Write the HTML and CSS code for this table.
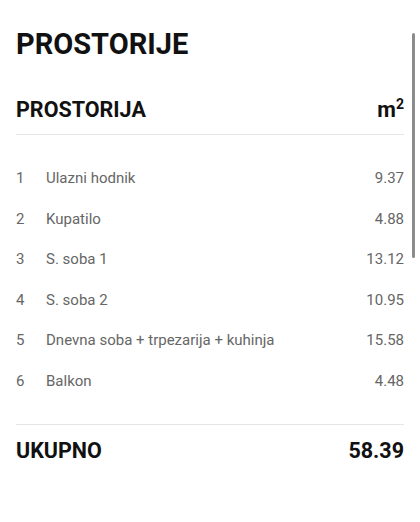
FILE: index.html
```html
<!DOCTYPE html>
<html lang="sr">
<head>
    <meta charset="UTF-8">
    <meta name="viewport" content="width=device-width, initial-scale=1.0">
    <title>Prostorije</title>
    <link rel="stylesheet" href="styles.css">
</head>
<body>
    <div class="page">
        <h1>PROSTORIJE</h1>

        <div class="table-head">
            <span>PROSTORIJA</span>
            <span>m<sup>2</sup></span>
        </div>

        <ul class="rooms">
            <li><span class="num">1</span><span class="name">Ulazni hodnik</span><span class="area">9.37</span></li>
            <li><span class="num">2</span><span class="name">Kupatilo</span><span class="area">4.88</span></li>
            <li><span class="num">3</span><span class="name">S. soba 1</span><span class="area">13.12</span></li>
            <li><span class="num">4</span><span class="name">S. soba 2</span><span class="area">10.95</span></li>
            <li><span class="num">5</span><span class="name">Dnevna soba + trpezarija + kuhinja</span><span class="area">15.58</span></li>
            <li><span class="num">6</span><span class="name">Balkon</span><span class="area">4.48</span></li>
        </ul>

        <div class="total">
            <span>UKUPNO</span>
            <span>58.39</span>
        </div>
    </div>
    <div class="scroll-thumb"></div>
</body>
</html>
```

FILE: styles.css
```css
body {
    margin: 0;
    font-family: Roboto, "Noto Sans", sans-serif;
    background: #fff;
    color: #111;
}

.page {
    padding: 0 16px;
}

h1 {
    margin: 28px 0 0;
    font-size: 29px;
    line-height: 32px;
    font-weight: 700;
}

.table-head {
    display: flex;
    justify-content: space-between;
    margin-top: 38px;
    padding-bottom: 12px;
    border-bottom: 1px solid #e6e6e6;
    font-size: 21.5px;
    line-height: 24px;
    font-weight: 700;
}

.table-head sup {
    font-size: 14px;
    line-height: 0;
}

.rooms {
    list-style: none;
    margin: 0;
    padding: 23px 0;
}

.rooms li {
    display: flex;
    font-size: 15px;
    line-height: 40.5px;
    color: #666;
}

.num {
    width: 30px;
}

.name {
    flex: 1;
}

.total {
    display: flex;
    justify-content: space-between;
    padding-top: 12px;
    border-top: 1px solid #e6e6e6;
    font-size: 21.5px;
    line-height: 28px;
    font-weight: 700;
}

.scroll-thumb {
    position: absolute;
    top: 33px;
    right: 5px;
    width: 3px;
    height: 225px;
    background: #8c8c8c;
    border-radius: 2px;
}
```
